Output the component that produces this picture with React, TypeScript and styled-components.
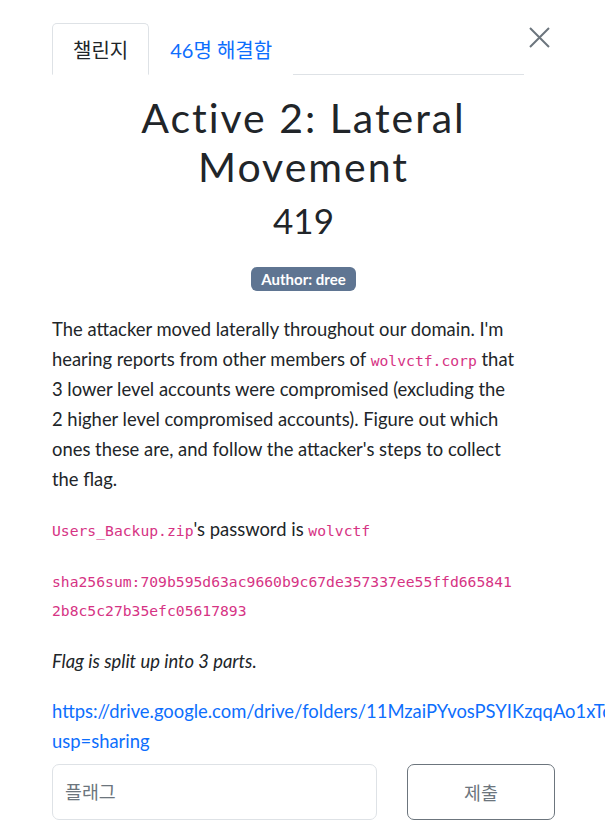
import React from "react";
import styled, { createGlobalStyle } from "styled-components";

const Global = createGlobalStyle`
  html, body { margin: 0; padding: 0; background: #fff; }
  body {
    font-family: Lato, "Noto Sans CJK KR", sans-serif;
    color: #212529;
    overflow: hidden;
  }
  * { box-sizing: border-box; }
`;

const Page = styled.div`
  width: 605px;
  padding: 23px 50px 0 52px;
`;

const Header = styled.div`
  display: flex;
  align-items: flex-start;
`;

const TabList = styled.ul`
  flex: 1;
  display: flex;
  list-style: none;
  margin: 0;
  padding: 0;
  border-bottom: 1px solid #dee2e6;
`;

const Tab = styled.li<{ $active?: boolean }>`
  margin-bottom: -1px;
  padding: 12px 20px 10px;
  font-size: 20px;
  line-height: 28px;
  font-family: Lato, "Noto Sans CJK KR", sans-serif;
  border: 1px solid ${(p) => (p.$active ? "#dee2e6" : "transparent")};
  border-bottom-color: ${(p) => (p.$active ? "#fff" : "transparent")};
  border-radius: 5px 5px 0 0;
  color: ${(p) => (p.$active ? "#212529" : "#0d6efd")};
  background: #fff;
`;

const Close = styled.button`
  width: 31px;
  height: 30px;
  margin-top: -1px;
  padding: 0;
  border: 0;
  background: none;
  display: flex;
  justify-content: center;
  align-items: center;
  color: #6c757d;
`;

const Title = styled.h1`
  margin: 18px 0 0;
  text-align: center;
  font-size: 41px;
  font-weight: 400;
  line-height: 49px;
  letter-spacing: 2px;
`;

const Value = styled.div`
  margin-top: 8px;
  text-align: center;
  font-size: 35px;
  line-height: 43px;
  font-weight: 400;
`;

const BadgeRow = styled.div`
  display: flex;
  justify-content: center;
  margin-top: 25px;
`;

const Badge = styled.span`
  background: #5f7592;
  color: #fff;
  font-weight: 700;
  font-size: 15px;
  line-height: 24px;
  padding: 0 10px;
  border-radius: 6px;
`;

const Description = styled.div`
  width: 464px;
  margin-top: 23px;
  font-size: 18.4px;
  line-height: 30px;
`;

const Para = styled.p<{ $tight?: boolean; $mono?: boolean }>`
  margin: 0 0 ${(p) => (p.$mono ? "22px" : p.$tight ? "8px" : "20px")};
  padding-top: ${(p) => (p.$mono ? "2px" : "0")};
  line-height: ${(p) => (p.$mono ? "29px" : "30px")};
  overflow-wrap: break-word;
`;

const Code = styled.code`
  font-family: "DejaVu Sans Mono", monospace;
  font-size: 14.7px;
  line-height: 1;
  color: #d63384;
  word-break: break-all;
`;

const Link = styled.a`
  color: #0d6efd;
  text-decoration: none;
  white-space: nowrap;
`;

const Form = styled.div`
  display: flex;
  gap: 30px;
`;

const Input = styled.input`
  width: 325px;
  height: 56px;
  padding: 0 12px;
  border: 1px solid #dee2e6;
  border-radius: 7px;
  font-family: Lato, "Noto Sans CJK KR", sans-serif;
  font-size: 18.4px;
  &::placeholder { color: #6c757d; }
`;

const Submit = styled.button`
  width: 148px;
  height: 56px;
  border: 1px solid #6c757d;
  border-radius: 7px;
  background: #fff;
  color: #6c757d;
  font-family: Lato, "Noto Sans CJK KR", sans-serif;
  font-size: 18.4px;
`;

export default function App() {
  return (
    <>
      <Global />
      <Page>
        <Header>
          <TabList>
            <Tab $active>챌린지</Tab>
            <Tab>46명 해결함</Tab>
          </TabList>
          <Close aria-label="close">
            <svg width="21" height="21" viewBox="0 0 21 21">
              <path d="M1 1L20 20M20 1L1 20" stroke="currentColor" strokeWidth="2" />
            </svg>
          </Close>
        </Header>
        <Title>Active 2: Lateral Movement</Title>
        <Value>419</Value>
        <BadgeRow>
          <Badge>Author: dree</Badge>
        </BadgeRow>
        <Description>
          <Para>
            The attacker moved laterally throughout our domain. I'm hearing reports from other members of{" "}
            <Code>wolvctf.corp</Code> that 3 lower level accounts were compromised (excluding the 2 higher level
            compromised accounts). Figure out which ones these are, and follow the attacker's steps to collect the flag.
          </Para>
          <Para>
            <Code>Users_Backup.zip</Code>'s password is <Code>wolvctf</Code>
          </Para>
          <Para $mono>
            <Code>sha256sum:709b595d63ac9660b9c67de357337ee55ffd6658412b8c5c27b35efc05617893</Code>
          </Para>
          <Para>
            <em>Flag is split up into 3 parts.</em>
          </Para>
          <Para $tight>
            <Link href="#">https://drive.google.com/drive/folders/11MzaiPYvosPSYIKzqqAo1xTq7WnBdLs?</Link>
            <br />
            <Link href="#">usp=sharing</Link>
          </Para>
        </Description>
        <Form>
          <Input placeholder="플래그" />
          <Submit>제출</Submit>
        </Form>
      </Page>
    </>
  );
}
